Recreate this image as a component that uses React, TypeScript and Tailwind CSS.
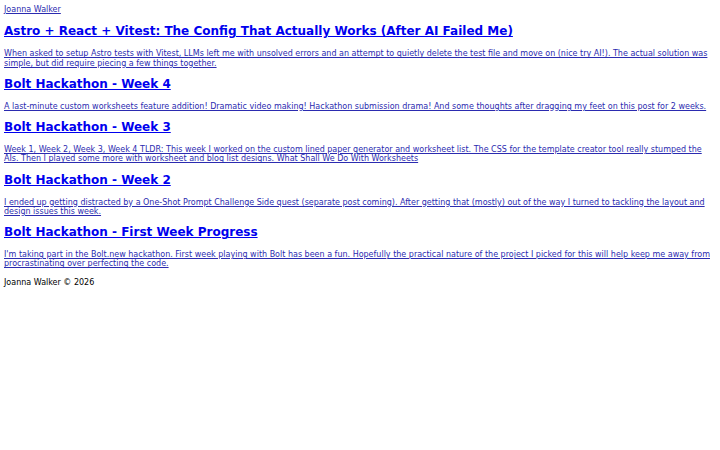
import React from 'react';

const posts = [
  {
    title: 'Astro + React + Vitest: The Config That Actually Works (After AI Failed Me)',
    summary:
      'When asked to setup Astro tests with Vitest, LLMs left me with unsolved errors and an attempt to quietly delete the test file and move on (nice try AI!). The actual solution was simple, but did require piecing a few things together.',
  },
  {
    title: 'Bolt Hackathon - Week 4',
    summary:
      'A last-minute custom worksheets feature addition! Dramatic video making! Hackathon submission drama! And some thoughts after dragging my feet on this post for 2 weeks.',
  },
  {
    title: 'Bolt Hackathon - Week 3',
    summary:
      'Week 1, Week 2, Week 3, Week 4 TLDR: This week I worked on the custom lined paper generator and worksheet list. The CSS for the template creator tool really stumped the AIs. Then I played some more with worksheet and blog list designs. What Shall We Do With Worksheets',
  },
  {
    title: 'Bolt Hackathon - Week 2',
    summary:
      'I ended up getting distracted by a One-Shot Prompt Challenge Side quest (separate post coming). After getting that (mostly) out of the way I turned to tackling the layout and design issues this week.',
  },
  {
    title: 'Bolt Hackathon - First Week Progress',
    summary:
      "I'm taking part in the Bolt.new hackathon. First week playing with Bolt has been a fun. Hopefully the practical nature of the project I picked for this will help keep me away from procrastinating over perfecting the code.",
  },
];

export default function App() {
  return (
    <div className="min-h-[450px] bg-white px-[4px] pt-[5px] font-['DejaVu_Sans',sans-serif] text-[8px] leading-[1.164] text-black">
      <header className="pb-[1px]">
        <a href="#" className="text-[#2b2bb0] underline">
          Joanna Walker
        </a>
      </header>

      <main>
        {posts.map((post) => (
          <article key={post.title}>
            <h2 className="mt-[10px] mb-[10px] text-[12px] font-bold">
              <a href="#" className="text-[#0000ee] underline">
                {post.title}
              </a>
            </h2>
            <p className="my-[8px]">
              <a href="#" className="text-[#2b2bb0] underline">
                {post.summary}
              </a>
            </p>
          </article>
        ))}
      </main>

      <footer className="mt-[9px]">Joanna Walker © 2026</footer>
    </div>
  );
}
